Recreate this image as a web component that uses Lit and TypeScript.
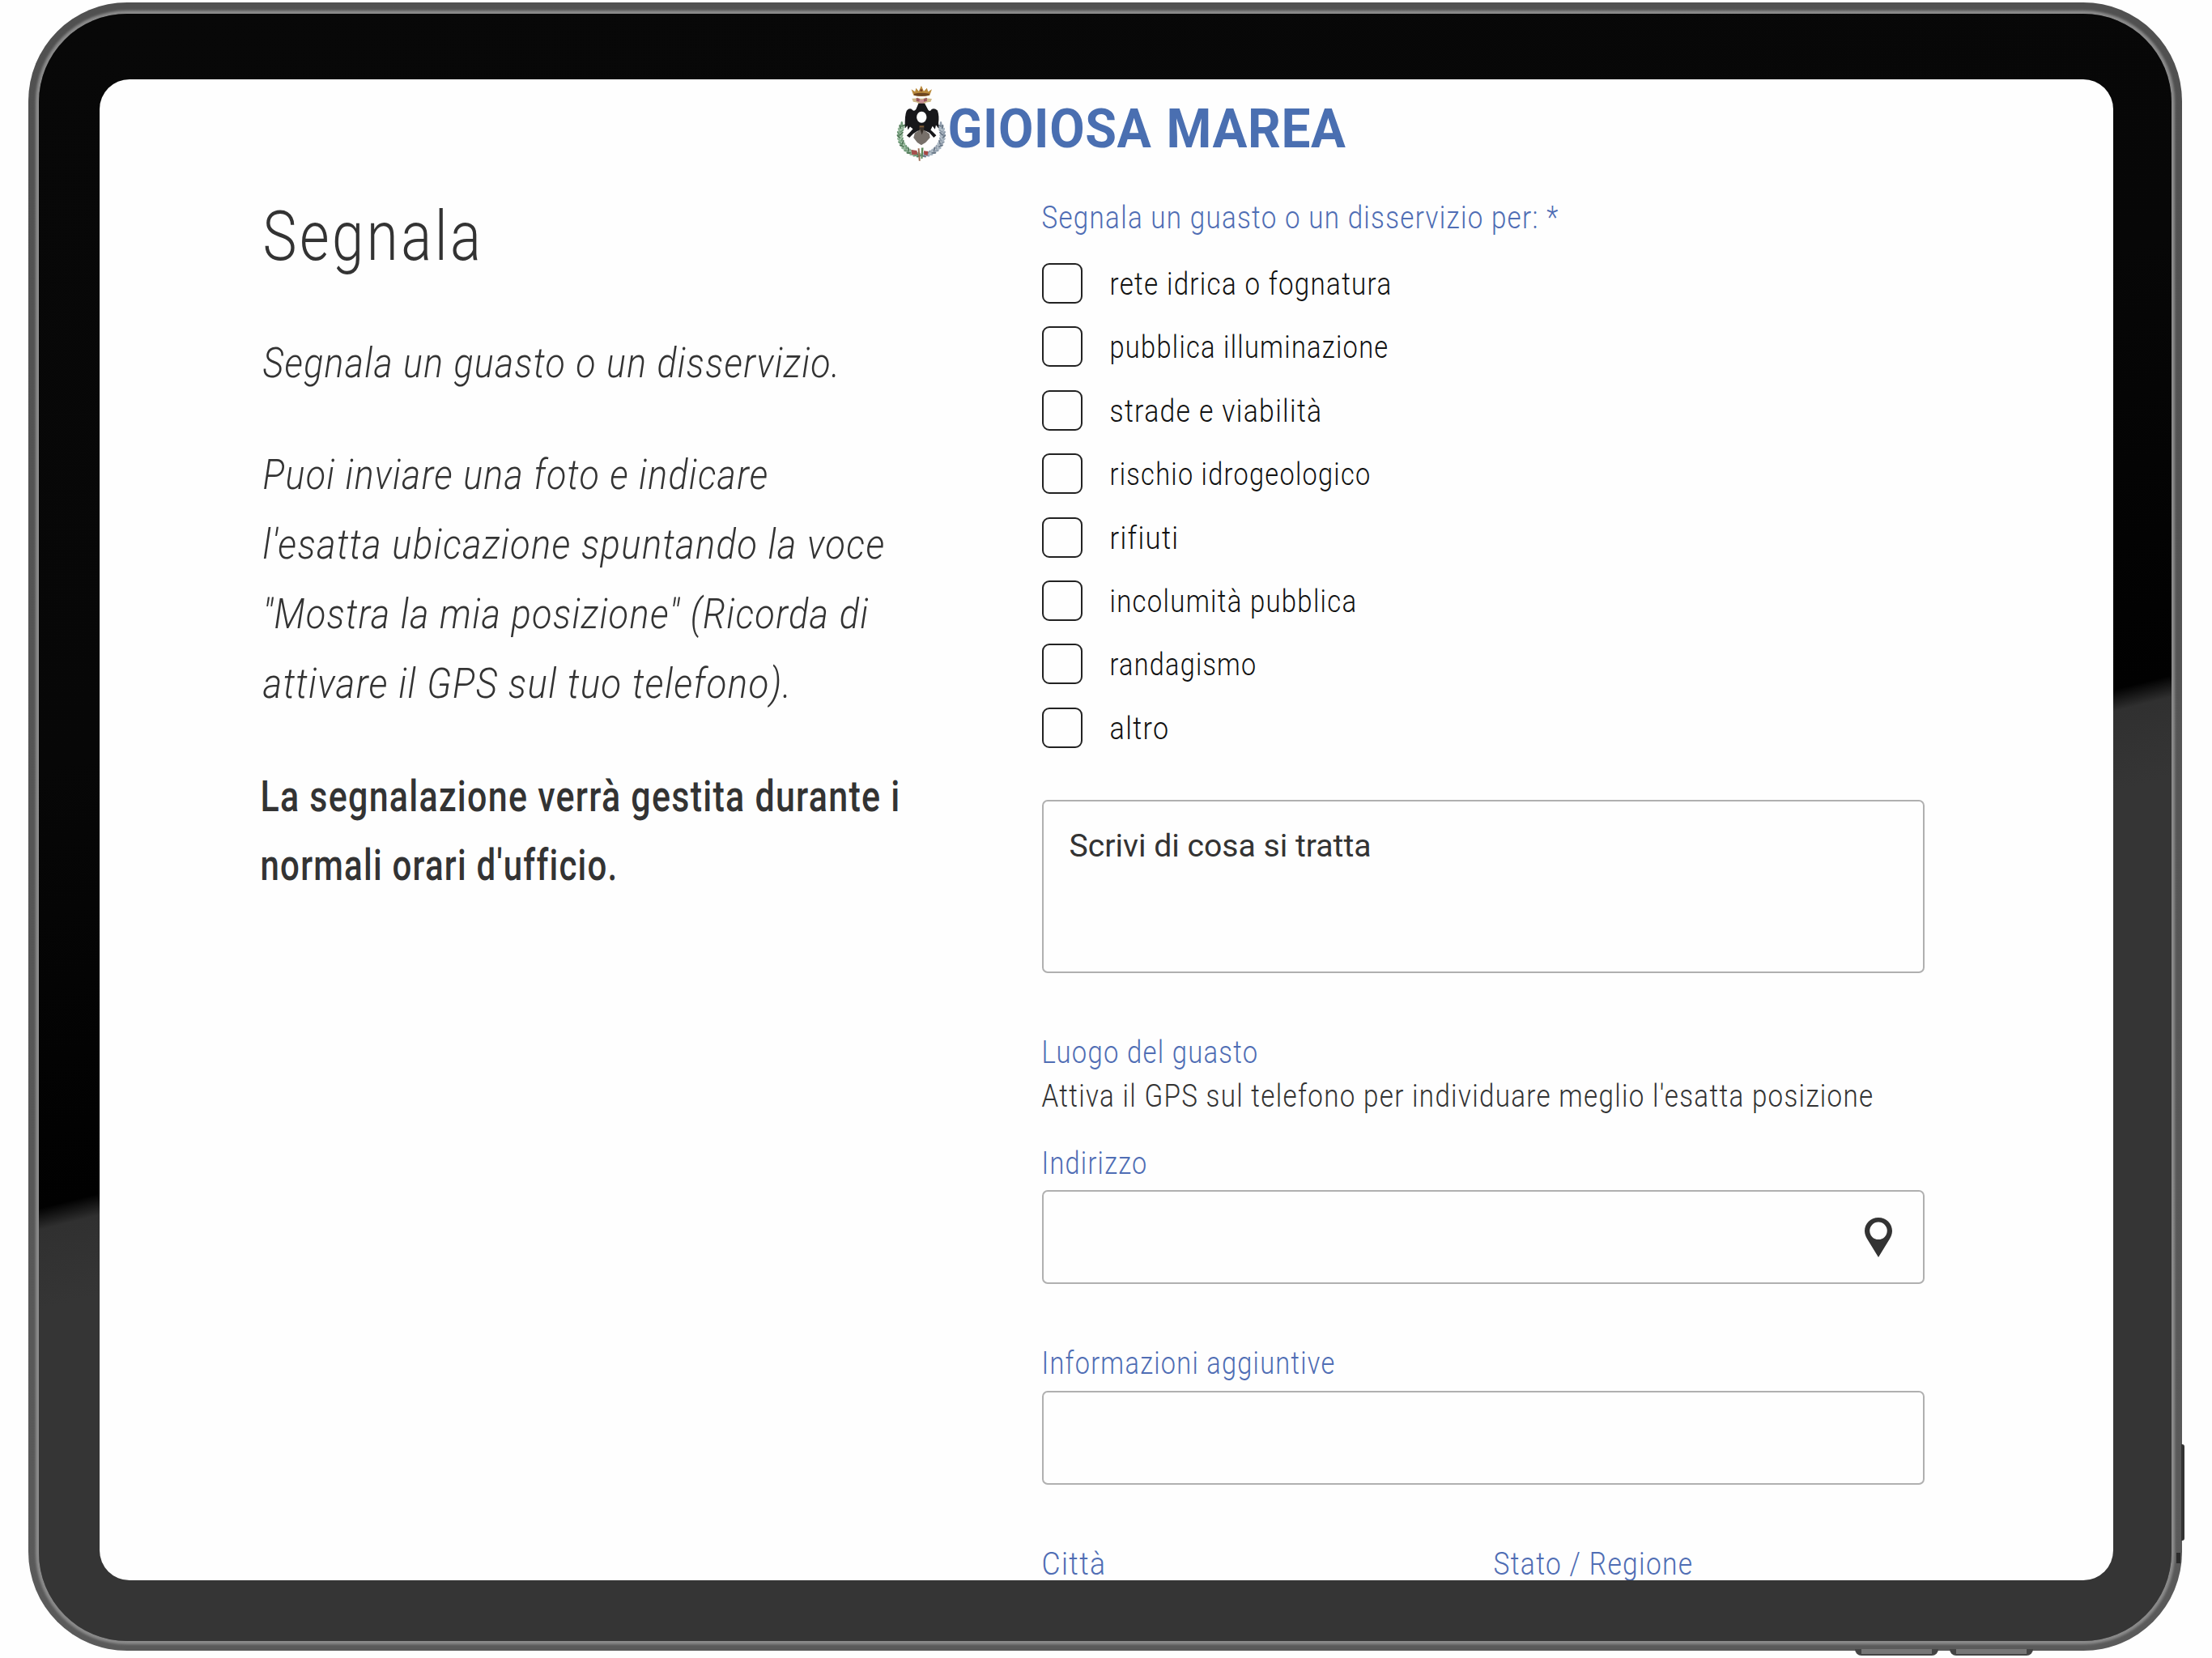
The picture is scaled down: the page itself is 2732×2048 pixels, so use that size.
import { LitElement, html, svg, css } from "lit";
import { customElement, property } from "lit/decorators.js";

// One line of text, condensed to a fixed width
@customElement("fit-line")
export class FitLine extends LitElement {
  @property({ type: String }) text = "";
  @property({ type: Number }) width = 100;
  @property({ type: Number }) height = 54;
  @property({ type: Number }) base = 40;

  static styles = css`
    :host {
      display: block;
      font-family: Roboto, "Liberation Sans", sans-serif;
    }
    .line {
      display: block;
      overflow: visible;
      fill: currentColor;
    }
  `;

  render() {
    return html`<svg class="line" width=${this.width} height=${this.height}>
      <text
        x="-0.5"
        y=${this.base}
        textLength=${this.width + 3}
        lengthAdjust="spacingAndGlyphs"
      >
        ${this.text}
      </text>
    </svg>`;
  }
}

@customElement("town-crest")
export class TownCrest extends LitElement {
  static styles = css`
    :host {
      display: block;
    }
    .crest {
      display: block;
    }
  `;

  private leaves(side: number) {
    const colors =
      side < 0 ? ["#6f9a78", "#557d5c", "#8fb395"] : ["#8e9cab", "#6c7b8b", "#a4b2be"];
    return Array.from({ length: 14 }, (_, i) => {
      const deg = -32 + i * 8.8;
      const a = (deg * Math.PI) / 180;
      const x = 124 + side * 68 * Math.cos(a);
      const y = 230 + 74 * Math.sin(a);
      return svg`
        <ellipse cx=${x + side * 5} cy=${y} rx="3.6" ry="10" fill=${colors[i % 3]}
          transform="rotate(${side * (deg + 32)} ${x} ${y})" />
        <ellipse cx=${x - side * 5} cy=${y} rx="3.2" ry="9" fill=${colors[(i + 1) % 3]}
          transform="rotate(${side * (deg - 32)} ${x} ${y})" />`;
    });
  }

  render() {
    return html`<svg
      class="crest"
      width="67"
      height="97"
      viewBox="36 40 174 290"
      preserveAspectRatio="none"
    >
      ${this.leaves(-1)} ${this.leaves(1)}
      <path
        d="M92 62 L104 71 L107 57 L116 69 L124 48 L132 69 L142 57 L146 71 L158 62 L151 84 Q124 91 99 84Z"
        fill="#b98a3c"
      />
      <path d="M101 78 Q124 72 150 78 L149 84 Q124 90 101 84Z" fill="#6d4520" />
      <circle cx="124" cy="66" r="4" fill="#7a3f20" />
      <path
        d="M94 96 L108 95 L112 92 L120 96 L130 96 L138 92 L144 95 L158 97 L154 108 L140 110 L134 116 L116 116 L110 110 L98 108Z"
        fill="#cfb98a"
      />
      <path d="M108 93 L120 98 L118 108 L108 106Z" fill="#9a5560" />
      <path d="M131 98 L142 93 L142 106 L132 108Z" fill="#9a5560" />
      <rect x="118" y="100" width="14" height="14" fill="#c98f93" />
      <path
        d="M115 114 L135 114 L146 138 Q152 146 157 136 Q166 130 176 140 Q182 160 179 186 L180 207 L171 194 L168 210 L160 198 L154 212 Q162 220 172 232 L164 240 L150 222 L138 216 L112 216 L98 226 L86 240 L77 233 Q90 218 97 208 L88 200 L81 212 L79 196 L72 206 Q70 158 77 141 Q86 129 95 137 Q101 145 107 136Z"
        fill="#17171a"
      />
      <ellipse cx="125" cy="165" rx="16" ry="21" fill="#fefefe" />
      <path d="M118 196 H133 L131 214 L125 222 L119 214Z" fill="#7d5a35" />
      <path
        d="M103 224 L118 212 L132 212 L150 226 L152 240 L138 258 L124 268 L111 258 L99 240Z"
        fill="#77706a"
      />
      <path d="M118 202 L126 230 L134 202Z" fill="#38302a" />
      <path d="M92 285 L110 288 L112 302 L94 304Z" fill="#a5504c" />
      <path d="M113 280 H118 L121 326 H116Z" fill="#9a6b50" />
      <path d="M124 278 H131 L128 318 H123Z" fill="#5f8a5a" />
      <path d="M132 289 L146 291 L144 306 L133 302Z" fill="#a84642" />
    </svg>`;
  }
}

@customElement("app-root")
export class AppRoot extends LitElement {
  private issues: [string, number][] = [
    ["rete idrica o fognatura", 346],
    ["pubblica illuminazione", 342],
    ["strade e viabilità", 260],
    ["rischio idrogeologico", 320],
    ["rifiuti", 83],
    ["incolumità pubblica", 303],
    ["randagismo", 179],
    ["altro", 71],
  ];

  private intro: [string, number][] = [
    ["Puoi inviare una foto e indicare", 622],
    ["l'esatta ubicazione spuntando la voce", 766],
    ['"Mostra la mia posizione" (Ricorda di', 746],
    ["attivare il GPS sul tuo telefono).", 651],
  ];

  static styles = css`
    :host {
      display: block;
      width: 2732px;
      height: 2048px;
      overflow: hidden;
      background: #fefefe;
    }
    .device {
      position: relative;
      box-sizing: border-box;
      width: 2660px;
      height: 2036px;
      margin: 3px 0 0 35px;
      padding: 14px 13px 12px;
      border-radius: 122px;
      background: linear-gradient(#505050, #5a5a5a);
    }
    .glass {
      box-sizing: border-box;
      height: 100%;
      padding: 81px 72px 75px 75px;
      border-radius: 109px;
      background: linear-gradient(
        165.96deg,
        #080808 0,
        #070707 35%,
        #010101 55.3%,
        #303030 56.3%,
        #353535 60%
      );
      box-shadow: 0 0 3px 4px #8b8b8b;
    }
    .screen {
      box-sizing: border-box;
      height: 100%;
      overflow: hidden;
      border-radius: 37px;
      background: #fefefe;
      color: #333;
    }
    .button {
      position: absolute;
      background: #777;
    }
    .power {
      right: -3px;
      top: 1781px;
      width: 4px;
      height: 119px;
      border-radius: 0 3px 3px 0;
      background: #333;
    }
    .antenna {
      right: 2px;
      top: 1915px;
      width: 5px;
      height: 13px;
      background: #2b2b2b;
    }
    .volume {
      bottom: -6px;
      width: 103px;
      height: 8px;
      box-sizing: border-box;
      border-radius: 0 0 9px 9px;
      border: solid #444;
      border-width: 0 8px 2px;
    }
    .up {
      left: 2256px;
    }
    .down {
      left: 2373px;
    }
    .header {
      display: flex;
      align-items: flex-start;
      box-sizing: border-box;
      height: 112px;
      padding: 5px 0 0 981px;
    }
    .brand {
      display: flex;
      gap: 21px;
      font-size: 67px;
      font-weight: 700;
      letter-spacing: 0.01em;
      color: #4a6fb1;
    }
    .content {
      display: grid;
      grid-template-columns: 962px 1090px;
      padding-left: 202px;
    }
    .title {
      font-size: 86px;
      font-weight: 300;
      letter-spacing: 0.05em;
    }
    .lead {
      font-size: 52px;
      font-weight: 300;
      font-style: italic;
      letter-spacing: 0.03em;
      margin-top: 80px;
    }
    .intro {
      margin-top: 52px;
    }
    .notice {
      font-size: 53px;
      font-weight: 500;
      letter-spacing: 0.03em;
      margin: 54px 0 0 -3px;
    }
    .form {
      font-size: 39.5px;
      font-weight: 300;
      letter-spacing: 0.04em;
      padding-top: 31.5px;
    }
    .label {
      color: #4f6db4;
    }
    .issues {
      display: flex;
      flex-direction: column;
      gap: 28.4px;
      margin: 29.5px 0 64px;
      color: #111;
    }
    .issue {
      display: flex;
      gap: 34px;
      height: 50px;
    }
    .box {
      box-sizing: border-box;
      width: 50px;
      height: 50px;
      border: 2.5px solid #222;
      border-radius: 9px;
    }
    .field {
      box-sizing: border-box;
      height: 116px;
      border: 2px solid #b0b0b0;
      border-radius: 7px;
      margin: 6.4px 0 71.4px;
    }
    .area {
      height: 214px;
      padding: 28.5px 32px;
      font-size: 39px;
      font-weight: 400;
      letter-spacing: 0;
      margin-top: 0;
    }
    .address {
      display: flex;
      justify-content: flex-end;
      align-items: center;
      padding: 2px 38px 0 0;
    }
    .first {
      margin-top: 28.4px;
    }
    .pair {
      display: grid;
      grid-template-columns: 558px 1fr;
    }
  `;

  render() {
    return html`<div class="device">
      <div class="button power"></div>
      <div class="glass">
        <div class="screen">
          <header class="header">
            <town-crest></town-crest>
            <div class="brand">
              <fit-line text="GIOIOSA" width="249" height="97" base="79"></fit-line>
              <fit-line text="MAREA" width="219" height="97" base="79"></fit-line>
            </div>
          </header>
          <main class="content">
            <section>
              <fit-line class="title" text="Segnala" width="270" height="120" base="110.5"></fit-line>
              <fit-line
                class="lead"
                text="Segnala un guasto o un disservizio."
                width="711"
                height="86"
                base="56"
              ></fit-line>
              <div class="lead intro">
                ${this.intro.map(
                  ([text, width]) =>
                    html`<fit-line text=${text} width=${width} height="86" base="56"></fit-line>`
                )}
              </div>
              <div class="notice">
                <fit-line
                  text="La segnalazione verrà gestita durante i"
                  width="788"
                  height="85"
                  base="56"
                ></fit-line>
                <fit-line text="normali orari d'ufficio." width="439" height="85" base="56"></fit-line>
              </div>
            </section>
            <section class="form">
              <fit-line
                class="label"
                text="Segnala un guasto o un disservizio per: *"
                width="636"
              ></fit-line>
              <div class="issues">
                ${this.issues.map(
                  ([text, width]) => html`<label class="issue">
                    <span class="box"></span>
                    <fit-line text=${text} width=${width} height="50" base="39.3"></fit-line>
                  </label>`
                )}
              </div>
              <div class="field area">
                <fit-line text="Scrivi di cosa si tratta" width="370"></fit-line>
              </div>
              <fit-line class="label" text="Luogo del guasto" width="265"></fit-line>
              <fit-line
                text="Attiva il GPS sul telefono per individuare meglio l'esatta posizione"
                width="1025"
              ></fit-line>
              <fit-line class="label first" text="Indirizzo" width="128"></fit-line>
              <div class="field address">
                <svg width="34" height="49" viewBox="0 0 34 49">
                  <path
                    fill="#333"
                    fill-rule="evenodd"
                    d="M17 0C7.500 0 0 7.300 0 16.500C0 20 1.200 23 2.900 26L17 49L31.100 26C32.800 23 34 20 34 16.500C34 7.300 26.500 0 17 0ZM17 5.500A10.800 10.800 0 1 1 17 27.100A10.800 10.800 0 1 1 17 5.500Z"
                  />
                </svg>
              </div>
              <fit-line class="label" text="Informazioni aggiuntive" width="360"></fit-line>
              <div class="field"></div>
              <div class="pair">
                <fit-line class="label" text="Città" width="77"></fit-line>
                <fit-line class="label" text="Stato / Regione" width="244"></fit-line>
              </div>
            </section>
          </main>
        </div>
      </div>
      <div class="button antenna"></div>
      <div class="button volume up"></div>
      <div class="button volume down"></div>
    </div>`;
  }
}
